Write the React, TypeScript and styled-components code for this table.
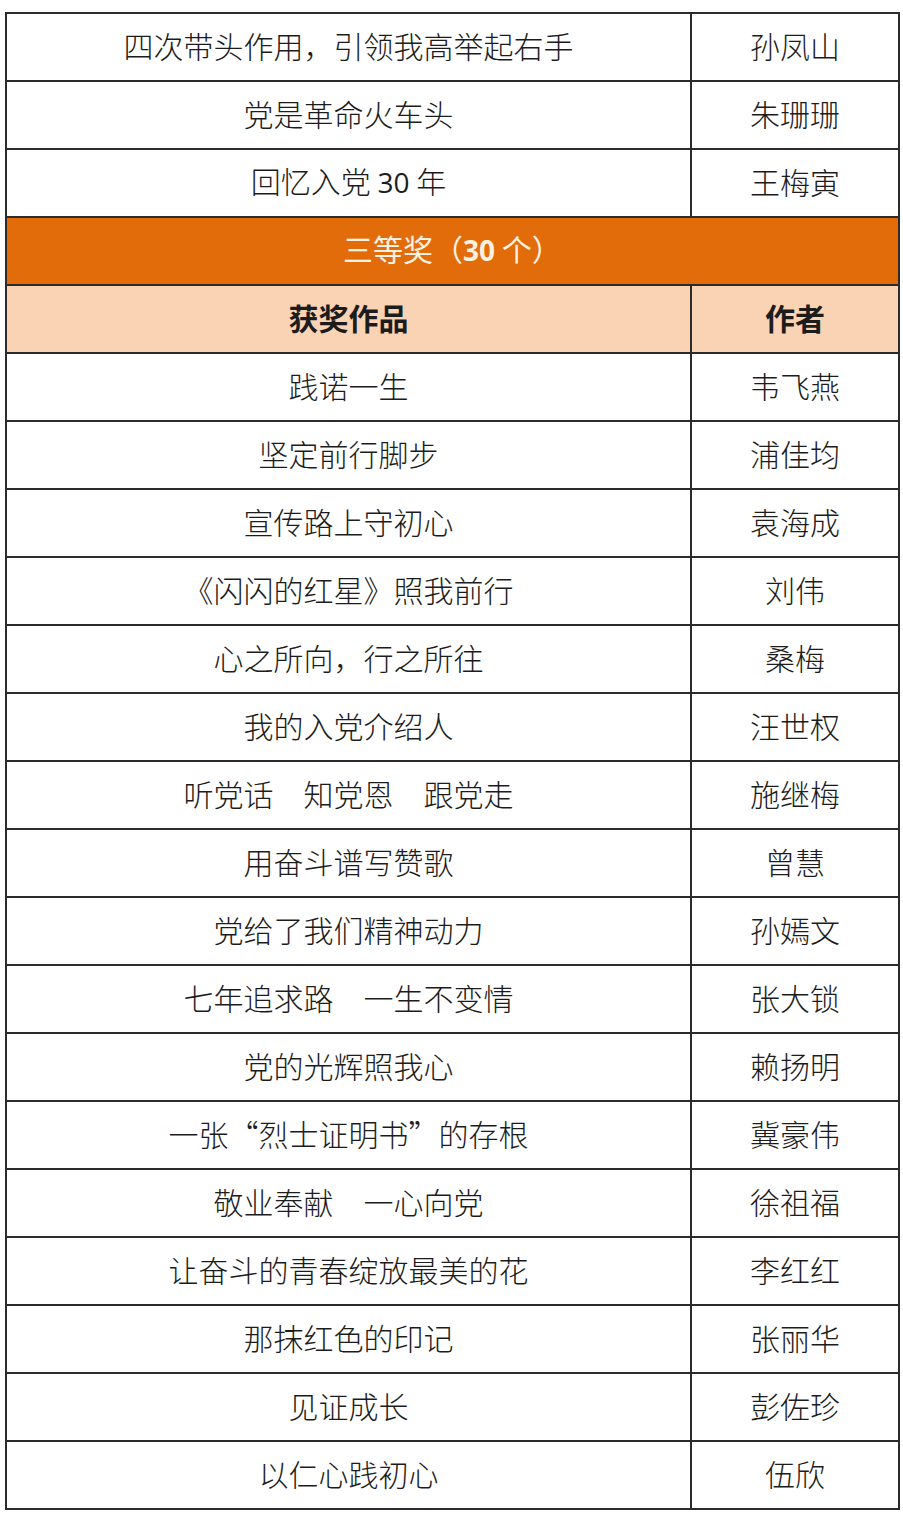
import React from "react";
import styled, { createGlobalStyle } from "styled-components";

const Global = createGlobalStyle`
  html, body { margin: 0; padding: 0; background: #ffffff; }
  body { font-family: "Noto Sans CJK SC", "Noto Sans", sans-serif; }
`;

const Page = styled.div`
  padding: 12px 0 0 5px;
`;

const Table = styled.table`
  border-collapse: collapse;
  table-layout: fixed;
  width: 893px;
  border: 2px solid #2b2b2b;
`;

const Row = styled.tr<{ $tone?: "band" | "head" }>`
  height: 68px;
  background: ${(p) =>
    p.$tone === "band" ? "#e36c0a" : p.$tone === "head" ? "#fad3b4" : "#ffffff"};
`;

const Cell = styled.td<{ $bold?: boolean; $light?: boolean }>`
  border: 2px solid #2b2b2b;
  padding: 0 0 5px 0;
  text-align: center;
  vertical-align: middle;
  font-family: "Noto Sans CJK SC", sans-serif;
  font-size: 30px;
  line-height: 1;
  font-weight: ${(p) => (p.$bold ? 700 : p.$light ? 400 : 300)};
  color: ${(p) => (p.$light ? "#fdf1e4" : "#1c1c1c")};
`;

const Num = styled.span<{ $bold?: boolean }>`
  font-family: "Open Sans", "Liberation Sans", sans-serif;
  font-weight: ${(p) => (p.$bold ? 700 : 400)};
  font-size: 28px;
`;

type Entry = [React.ReactNode, string];

const top: Entry[] = [
  ["四次带头作用，引领我高举起右手", "孙凤山"],
  ["党是革命火车头", "朱珊珊"],
  [
    <>
      回忆入党 <Num>30</Num> 年
    </>,
    "王梅寅",
  ],
];

const third: Entry[] = [
  ["践诺一生", "韦飞燕"],
  ["坚定前行脚步", "浦佳均"],
  ["宣传路上守初心", "袁海成"],
  ["《闪闪的红星》照我前行", "刘伟"],
  ["心之所向，行之所往", "桑梅"],
  ["我的入党介绍人", "汪世权"],
  ["听党话　知党恩　跟党走", "施继梅"],
  ["用奋斗谱写赞歌", "曾慧"],
  ["党给了我们精神动力", "孙嫣文"],
  ["七年追求路　一生不变情", "张大锁"],
  ["党的光辉照我心", "赖扬明"],
  ["一张“烈士证明书”的存根", "冀豪伟"],
  ["敬业奉献　一心向党", "徐祖福"],
  ["让奋斗的青春绽放最美的花", "李红红"],
  ["那抹红色的印记", "张丽华"],
  ["见证成长", "彭佐珍"],
  ["以仁心践初心", "伍欣"],
];

export default function App() {
  return (
    <Page>
      <Global />
      <Table>
        <colgroup>
          <col style={{ width: 685 }} />
          <col style={{ width: 208 }} />
        </colgroup>
        <tbody>
          {top.map(([work, author], i) => (
            <Row key={`t${i}`}>
              <Cell>{work}</Cell>
              <Cell>{author}</Cell>
            </Row>
          ))}
          <Row $tone="band">
            <Cell colSpan={2} $light>
              三等奖（<Num $bold>30</Num> 个）
            </Cell>
          </Row>
          <Row $tone="head">
            <Cell $bold>获奖作品</Cell>
            <Cell $bold>作者</Cell>
          </Row>
          {third.map(([work, author], i) => (
            <Row key={`r${i}`}>
              <Cell>{work}</Cell>
              <Cell>{author}</Cell>
            </Row>
          ))}
        </tbody>
      </Table>
    </Page>
  );
}
